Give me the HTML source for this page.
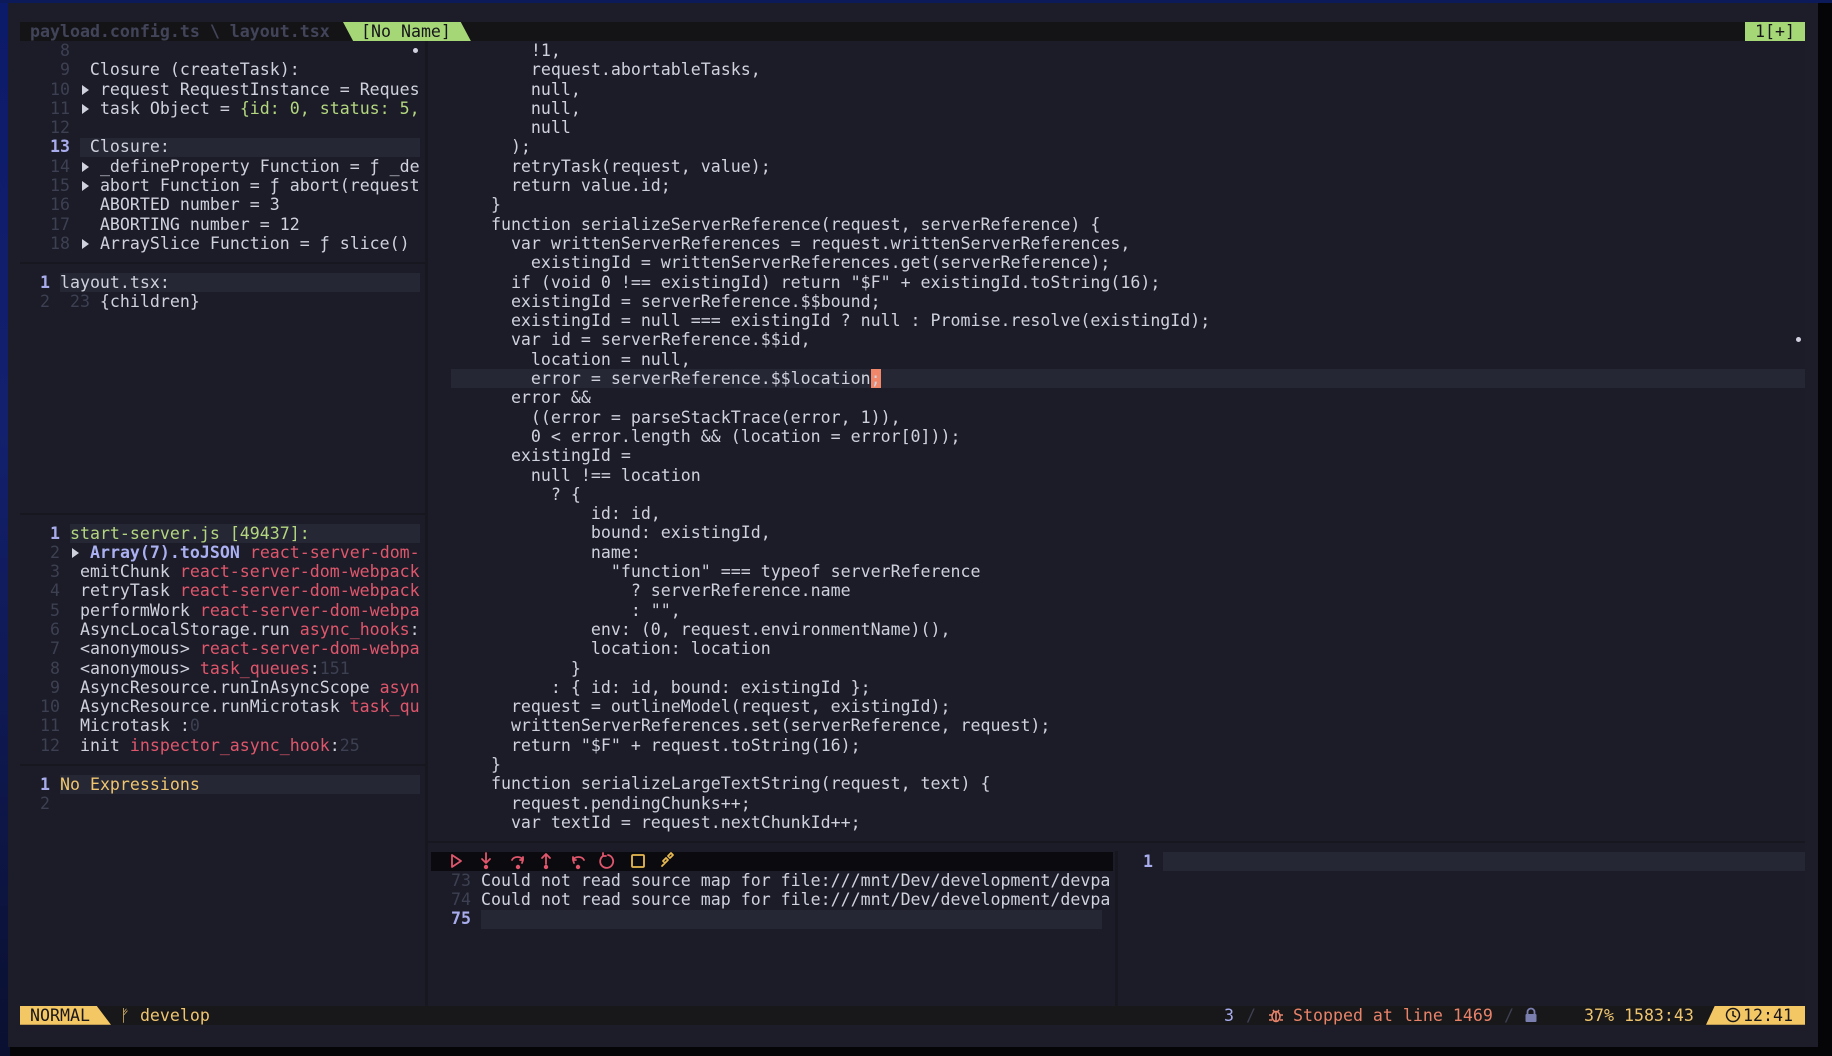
<!DOCTYPE html>
<html><head><meta charset="utf-8"><style>
*{margin:0;padding:0;box-sizing:border-box}
body{width:1832px;height:1056px;background:#050507;position:relative;overflow:hidden;font-family:"DejaVu Sans Mono","Liberation Mono",monospace;font-size:16.6px;color:#cfd1dc}
.abs{position:absolute}
pre{position:absolute;font-family:inherit;font-size:16.6px;line-height:19.3px;white-space:pre}
.n{color:#3d4052}.cn{color:#a8acec;font-weight:bold}
.g{color:#b3d67f}.r{color:#e0566c}.y{color:#efc56f}.lv{color:#aab0f2;font-weight:bold}
.cl{position:absolute;background:#262734;height:19.3px}
.t{display:inline-block;width:10px;height:19.3px;vertical-align:top;position:relative}
.t:after{content:"";position:absolute;left:2px;top:5px;border-left:7px solid #cfd1dc;border-top:5px solid transparent;border-bottom:5px solid transparent}
</style></head><body>
<div class="abs" style="left:0;top:0;width:10px;height:1056px;background:linear-gradient(#0c1a6a,#13206e 40%,#0a1030)"></div>
<div class="abs" style="left:0;top:0;width:1832px;height:3px;background:#0c1a5a"></div>
<div class="abs" style="left:8px;top:3px;width:1810px;height:1044px;background:#1d1d2a"></div>
<div class="abs" style="left:20px;top:41px;width:1785px;height:965px;background:#1b1c27"></div>
<div class="abs" style="left:425px;top:41px;width:3px;height:965px;background:#17171f"></div>
<!-- tabline -->
<div class="abs" style="left:20px;top:22px;width:1785px;height:19.3px;background:#141417"></div>
<pre style="left:30px;top:22px;color:#42455a;font-weight:bold">payload.config.ts \ layout.tsx</pre>
<div class="abs" style="left:343px;top:22px;width:128px;height:19.3px;background:#a6d777;clip-path:polygon(0 0,92% 0,100% 100%,8% 100%)"></div>
<pre style="left:361px;top:22px;color:#16161a">[No Name]</pre>
<div class="abs" style="left:1745px;top:22px;width:60px;height:19.3px;background:#a6d777"></div>
<pre style="left:1755px;top:22px;color:#16161a">1[+]</pre>

<!-- left scopes -->
<div class="cl" style="left:80px;top:137.5px;width:340px"></div>
<div class="abs" style="left:413px;top:48px;width:5px;height:5px;border-radius:50%;background:#d0d0e0"></div>
<pre style="left:20px;top:41px"><span class="n">    8</span>
<span class="n">    9</span>  Closure (createTask):
<span class="n">   10</span> <span class="t"></span> request RequestInstance = Reques
<span class="n">   11</span> <span class="t"></span> task Object = <span class="g">{id: 0, status: 5,</span>
<span class="n">   12</span>
<span class="cn">   13</span>  Closure:
<span class="n">   14</span> <span class="t"></span> _defineProperty Function = ƒ _de
<span class="n">   15</span> <span class="t"></span> abort Function = ƒ abort(request
<span class="n">   16</span>   ABORTED number = 3
<span class="n">   17</span>   ABORTING number = 12
<span class="n">   18</span> <span class="t"></span> ArraySlice Function = ƒ slice()</pre>
<div class="abs" style="left:20px;top:262px;width:405px;height:2px;background:#17171f"></div>
<div class="cl" style="left:60px;top:272.6px;width:360px"></div>
<pre style="left:20px;top:272.6px"><span class="cn">  1</span> layout.tsx:
<span class="n">  2  23</span> {children}</pre>
<div class="abs" style="left:20px;top:513px;width:405px;height:2px;background:#17171f"></div>
<div class="cl" style="left:70px;top:523.5px;width:350px"></div>
<pre style="left:20px;top:523.5px"><span class="cn">   1</span> <span class="g">start-server.js [49437]:</span>
<span class="n">   2</span> <span class="t"></span> <span class="lv">Array(7).toJSON</span> <span class="r">react-server-dom-</span>
<span class="n">   3</span>  emitChunk <span class="r">react-server-dom-webpack</span>
<span class="n">   4</span>  retryTask <span class="r">react-server-dom-webpack</span>
<span class="n">   5</span>  performWork <span class="r">react-server-dom-webpa</span>
<span class="n">   6</span>  AsyncLocalStorage.run <span class="r">async_hooks</span>:
<span class="n">   7</span>  &lt;anonymous&gt; <span class="r">react-server-dom-webpa</span>
<span class="n">   8</span>  &lt;anonymous&gt; <span class="r">task_queues</span>:<span class="n">151</span>
<span class="n">   9</span>  AsyncResource.runInAsyncScope <span class="r">asyn</span>
<span class="n">  10</span>  AsyncResource.runMicrotask <span class="r">task_qu</span>
<span class="n">  11</span>  Microtask :<span class="n">0</span>
<span class="n">  12</span>  init <span class="r">inspector_async_hook</span>:<span class="n">25</span></pre>
<div class="abs" style="left:20px;top:764px;width:405px;height:2px;background:#17171f"></div>
<div class="cl" style="left:60px;top:774.6px;width:360px"></div>
<pre style="left:20px;top:774.6px"><span class="cn">  1</span> <span class="y">No Expressions</span>
<span class="n">  2</span></pre>

<!-- main code -->
<div class="cl" style="left:451px;top:369px;width:1354px"></div>
<div class="abs" style="left:871px;top:369px;width:10px;height:19.3px;background:#f0876a"></div>
<div class="abs" style="left:1796px;top:337px;width:5px;height:5px;border-radius:50%;background:#d0d0e0"></div>
<pre style="left:451px;top:41px">        !1,
        request.abortableTasks,
        null,
        null,
        null
      );
      retryTask(request, value);
      return value.id;
    }
    function serializeServerReference(request, serverReference) {
      var writtenServerReferences = request.writtenServerReferences,
        existingId = writtenServerReferences.get(serverReference);
      if (void 0 !== existingId) return "$F" + existingId.toString(16);
      existingId = serverReference.$$bound;
      existingId = null === existingId ? null : Promise.resolve(existingId);
      var id = serverReference.$$id,
        location = null,
        error = serverReference.$$location;
      error &amp;&amp;
        ((error = parseStackTrace(error, 1)),
        0 &lt; error.length &amp;&amp; (location = error[0]));
      existingId =
        null !== location
          ? {
              id: id,
              bound: existingId,
              name:
                "function" === typeof serverReference
                  ? serverReference.name
                  : "",
              env: (0, request.environmentName)(),
              location: location
            }
          : { id: id, bound: existingId };
      request = outlineModel(request, existingId);
      writtenServerReferences.set(serverReference, request);
      return "$F" + request.toString(16);
    }
    function serializeLargeTextString(request, text) {
      request.pendingChunks++;
      var textId = request.nextChunkId++;</pre>
<div class="abs" style="left:428px;top:841px;width:1377px;height:2px;background:#17171f"></div>
<!-- repl -->
<div class="abs" style="left:1115px;top:851px;width:3px;height:155px;background:#17171f"></div>
<div class="abs" style="left:431px;top:851.6px;width:682px;height:19.3px;background:#0b0b0f"></div>
<svg class="abs" style="left:440px;top:851px" width="260" height="20" viewBox="440 851 260 20" fill="none" stroke-width="1.8" stroke-linecap="round" stroke-linejoin="round">
<g stroke="#e0566c">
<path d="M452 855v12l9-6z"/>
<path d="M486 853v10M482 859l4 4 4-4"/><circle cx="486" cy="867" r="1.3" fill="#e0566c"/>
<path d="M512 860a6 5 0 0 1 11 0l-1 3M523 857v3h-3"/><circle cx="518" cy="867" r="1.3" fill="#e0566c"/>
<path d="M546 864v-10M542 858l4-4 4 4"/><circle cx="546" cy="867" r="1.3" fill="#e0566c"/>
<path d="M584 860a6 5 0 0 0 -11 0l1 3M573 857v3h3"/><circle cx="578" cy="867" r="1.3" fill="#e0566c"/>
<path d="M603 856a6.5 6.5 0 1 0 5 -1M603 853v3h3"/>
</g>
<g stroke="#e8b94f">
<rect x="632" y="855" width="12" height="12" rx="1"/>
<path d="M662 866l3-3M665 863l-2-2 3-3 2 2zM670 858l-2-2 3-3 2 2z M668 856l2-2"/>
</g></svg>
<div class="cl" style="left:481px;top:909.5px;width:621px"></div>
<pre style="left:441px;top:870.9px"><span class="n"> 73</span> Could not read source map for file:///mnt/Dev/development/devpa
<span class="n"> 74</span> Could not read source map for file:///mnt/Dev/development/devpa
<span class="cn"> 75</span></pre>
<div class="cl" style="left:1163px;top:851.6px;width:642px"></div>
<pre style="left:1133px;top:851.6px"><span class="cn"> 1</span></pre>

<!-- statusline -->
<div class="abs" style="left:20px;top:1005.5px;width:1785px;height:19.3px;background:#18171a"></div>
<div class="abs" style="left:20px;top:1005.5px;width:91px;height:19.3px;background:#f4c765;clip-path:polygon(0 0,84% 0,100% 100%,0 100%)"></div>
<pre style="left:30px;top:1005.5px;color:#18171a">NORMAL</pre>
<pre style="left:120px;top:1005.5px;color:#efc56f">ᚠ develop</pre>
<pre style="left:1224px;top:1005.5px;color:#a8acec">3</pre>
<pre style="left:1246px;top:1005.5px" class="n">/</pre>
<svg class="abs" style="left:1268px;top:1007px" width="16" height="16" viewBox="0 0 16 16" fill="none" stroke="#e8836a" stroke-width="1.6"><ellipse cx="8" cy="9.5" rx="4" ry="5"/><path d="M5 3l1.5 2M11 3l-1.5 2M1 8h3M12 8h3M1 13h3M12 13h3M8 5v10"/></svg>
<pre style="left:1293px;top:1005.5px;color:#e8836a">Stopped at line 1469</pre>
<pre style="left:1504px;top:1005.5px" class="n">/</pre>
<svg class="abs" style="left:1524px;top:1007px" width="14" height="16" viewBox="0 0 14 16"><path d="M3.5 7V5a3.5 3.5 0 017 0v2" fill="none" stroke="#7a7fb0" stroke-width="1.8"/><rect x="1.5" y="7" width="11" height="8" rx="1" fill="#7a7fb0"/></svg>
<pre style="left:1584px;top:1005.5px;color:#efc56f">37% 1583:43</pre>
<div class="abs" style="left:1706px;top:1005.5px;width:99px;height:19.3px;background:#f4c765;clip-path:polygon(9% 0,100% 0,100% 100%,0 100%)"></div>
<svg class="abs" style="left:1725px;top:1007px" width="16" height="16" viewBox="0 0 16 16" fill="none" stroke="#18171a" stroke-width="1.5"><circle cx="8" cy="8" r="6.5"/><path d="M8 4v4.5l3 1.5"/></svg>
<pre style="left:1743px;top:1005.5px;color:#18171a">12:41</pre>
</body></html>
